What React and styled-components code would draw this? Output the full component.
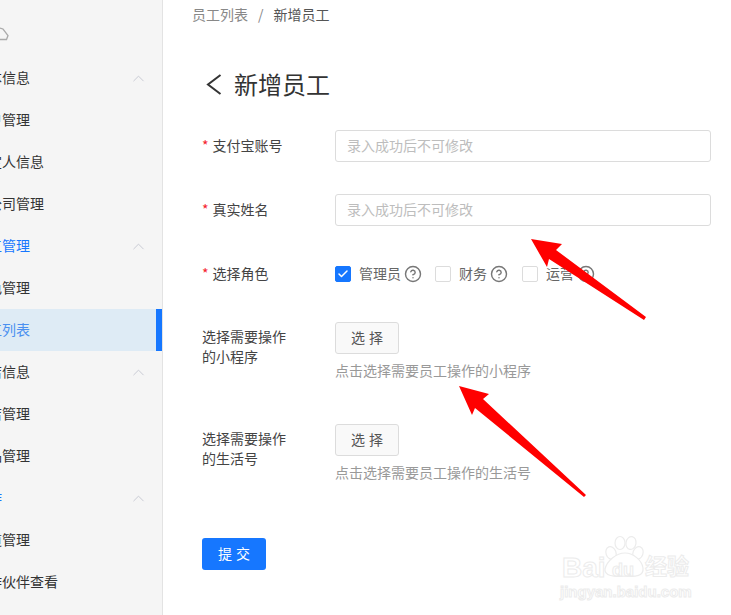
import React from 'react';
import styled, { createGlobalStyle } from 'styled-components';
import { CircleHelp, Check, ChevronUp } from 'lucide-react';

const Global = createGlobalStyle`
  html, body { margin: 0; padding: 0; background: #fff; }
  body { font-family: "Noto Sans CJK SC", "Liberation Sans", sans-serif; font-size: 14px; color: #333; }
`;
const Page = styled.div`
  position: relative; display: flex; width: 731px; height: 615px; overflow: hidden; background: #fff;
`;
const Sidebar = styled.nav`
  flex: none; width: 163px; height: 615px; box-sizing: border-box; overflow: hidden;
  background: #f5f5f5; border-right: 1px solid #e3e3e3; padding-top: 26px;
`;
const TopIcon = styled.svg`
  display: block; width: 10px; height: 16px; margin-bottom: 15px; color: #aaa;
`;
const NavRow = styled.div`
  height: 42px; display: flex; align-items: center; justify-content: space-between;
  padding-right: 14px; white-space: nowrap;
  color: ${p => (p.$blue ? '#1677ff' : '#333')};
  background: ${p => (p.$active ? '#deebf5' : 'transparent')};
  ${p => p.$active && 'color: #4a90f0; border-right: 6px solid #1677ff; padding-right: 8px;'}
`;
const NavText = styled.span`
  margin-left: -26px; padding-bottom: 2px;
`;
const Chevron = styled(ChevronUp)`
  color: #c6c8d2; flex: none;
`;
const Main = styled.main`
  flex: 1; min-width: 0; display: flex; flex-direction: column; padding: 0 20px 0 39px;
`;
const Breadcrumb = styled.div`
  height: 26px; display: flex; align-items: center; margin-left: -10px; color: #888; font-size: 14px; padding-top: 2px; box-sizing: border-box;
`;
const Sep = styled.span`
  margin: 0 10px; color: #888;
`;
const Current = styled.span`
  color: #555;
`;
const Title = styled.h1`
  margin: 41px 0 29px; height: 34px; display: flex; align-items: center; font-size: 24px; font-weight: 400; color: #333; line-height: 34px;
`;
const Back = styled.svg`
  width: 16px; height: 24px; margin: 2px 12px 0 4px; color: #333; flex: none;
`;
const Row = styled.div`
  display: flex; align-items: ${p => (p.$top ? 'flex-start' : 'center')};
  margin-bottom: ${p => p.$gap ?? 32}px;
`;
const Label = styled.label`
  flex: none; width: 133px; box-sizing: border-box; color: #444; font-size: 14px; line-height: 20px;
  padding-bottom: 2px;
  ${p => p.$top && 'padding-top: 4px;'}
`;
const LabelWrap = styled.span`
  display: block; width: 90px;
`;
const Star = styled.span`
  color: #f5222d; margin: 0 4px 0 0;
`;
const Input = styled.input`
  flex: 1; min-width: 0; height: 32px; box-sizing: border-box; border: 1px solid #dcdcdc; border-radius: 3px;
  padding: 0 11px 2px; font: 14px "Noto Sans CJK SC", sans-serif; background: #fff; outline: none;
  &::placeholder { color: #bdbdbd; opacity: 1; }
`;
const Field = styled.div`
  display: flex; flex-direction: column; align-items: flex-start;
`;
const Options = styled.div`
  display: flex; align-items: center; height: 32px;
`;
const Option = styled.div`
  display: flex; align-items: center; margin-right: ${p => p.$gap ?? 0}px; color: #666; font-size: 14px;
`;
const OptionText = styled.span`
  padding-bottom: 2px;
`;
const Box = styled.span`
  width: 16px; height: 16px; box-sizing: border-box; display: flex; align-items: center; justify-content: center;
  border-radius: 2px; margin-right: 8px; color: #fff;
  background: ${p => (p.$on ? '#1677ff' : '#fff')};
  border: 1px solid ${p => (p.$on ? '#1677ff' : '#dcdcdc')};
`;
const Help = styled(CircleHelp)`
  color: #777; margin-left: 3px; flex: none;
`;
const SelectButton = styled.button`
  width: 64px; height: 32px; box-sizing: border-box; border: 1px solid #dcdcdc; border-radius: 3px; background: #f9f9f9;
  color: #555; font: 14px "Noto Sans CJK SC", sans-serif; padding: 0 0 2px; word-spacing: 1px;
`;
const Hint = styled.div`
  margin-top: 6px; height: 20px; line-height: 20px; font-size: 14px; color: #999;
`;
const Submit = styled.button`
  width: 64px; height: 32px; border: 0; border-radius: 3px; background: #1677ff; color: #fff;
  font: 14px "Noto Sans CJK SC", sans-serif; padding: 0 0 2px; word-spacing: 1px;
`;
const ArrowLayer = styled.svg`
  position: absolute; inset: 0; width: 731px; height: 615px; pointer-events: none;
`;
const Watermark = styled.div`
  position: absolute; left: 560px; top: 535px; width: 140px; height: 70px; pointer-events: none;
`;
const Paw = styled.svg`
  position: absolute; left: 0; top: 0; width: 140px; height: 70px;
`;
const MarkText = styled.span`
  position: absolute; left: ${p => p.$x}px; top: ${p => p.$y}px; font-family: "Liberation Sans", "Noto Sans CJK SC", sans-serif;
  font-size: ${p => p.$s}px; line-height: 1; font-weight: 700; color: #fff; -webkit-text-stroke: 1px #ececec; white-space: nowrap;
`;

const nav = [
  ['基本信息', 1], ['账户管理'], ['法定人信息'], ['子公司管理'],
  ['员工管理', 1, 1], ['角色管理'], ['员工列表', 0, 0, 1],
  ['门店信息', 1], ['门店管理'], ['商品管理'],
  ['合作', 1, 1], ['渠道管理'], ['合作伙伴查看'],
];

function Question() { return <Help size={18} strokeWidth={1.9} />; }

export default function App() {
  return (
    <Page>
      <Global />
      <Sidebar>
        <TopIcon viewBox="0 0 10 16" fill="none" stroke="currentColor" strokeWidth="1.3">
          <path d="M0 2 L3 3 L8 9.5 L6.5 13.5 L0 13.5" />
        </TopIcon>
        {nav.map(([t, chev, blue, active]) => (
          <NavRow key={t} $blue={blue === 1} $active={active}>
            <NavText>{t}</NavText>
            {chev ? <Chevron size={19} strokeWidth={1.2} /> : null}
          </NavRow>
        ))}
      </Sidebar>
      <Main>
        <Breadcrumb>员工列表<Sep>/</Sep><Current>新增员工</Current></Breadcrumb>
        <Title>
          <Back viewBox="0 0 16 24" fill="none" stroke="currentColor" strokeWidth="2">
            <path d="M14.5 2 L2 11.5 L14.5 21" />
          </Back>
          新增员工
        </Title>
        <Row>
          <Label><Star>*</Star>支付宝账号</Label>
          <Input placeholder="录入成功后不可修改" />
        </Row>
        <Row>
          <Label><Star>*</Star>真实姓名</Label>
          <Input placeholder="录入成功后不可修改" />
        </Row>
        <Row>
          <Label><Star>*</Star>选择角色</Label>
          <Options>
            <Option $gap={13}><Box $on><Check size={12} strokeWidth={3} /></Box><OptionText>管理员</OptionText><Question /></Option>
            <Option $gap={14}><Box /><OptionText>财务</OptionText><Question /></Option>
            <Option><Box /><OptionText>运营</OptionText><Question /></Option>
          </Options>
        </Row>
        <Row $top $gap={44}>
          <Label $top><LabelWrap>选择需要操作的小程序</LabelWrap></Label>
          <Field>
            <SelectButton>选 择</SelectButton>
            <Hint>点击选择需要员工操作的小程序</Hint>
          </Field>
        </Row>
        <Row $top $gap={56}>
          <Label $top><LabelWrap>选择需要操作的生活号</LabelWrap></Label>
          <Field>
            <SelectButton>选 择</SelectButton>
            <Hint>点击选择需要员工操作的生活号</Hint>
          </Field>
        </Row>
        <div><Submit>提 交</Submit></div>
      </Main>
      <ArrowLayer viewBox="0 0 731 615">
        <polygon fill="#ff0000" points="531,239 562,244 556,250 646,317 644,320 549,259 547,267" />
        <polygon fill="#ff0000" points="459,386 489,394 483,399 586,495 584,497 475,408 472,415" />
      </ArrowLayer>
      <Watermark>
        <Paw viewBox="0 0 140 70" fill="#fff" stroke="#ececec" strokeWidth="1.2">
          <ellipse cx="60" cy="8" rx="5" ry="6.5" />
          <ellipse cx="51" cy="18" rx="5" ry="6.5" transform="rotate(-20 51 18)" />
          <ellipse cx="71" cy="8" rx="5" ry="6.5" transform="rotate(10 71 8)" />
          <ellipse cx="78" cy="18" rx="5" ry="6.5" transform="rotate(20 78 18)" />
          <path d="M45 34 C47 26 56 18 65 18 C74 18 82 26 83 33 C84 41 76 42 65 41 C54 42 44 41 45 34 Z" />
        </Paw>
        <MarkText $x={2} $y={19} $s={28}>Bai</MarkText>
        <MarkText $x={52} $y={26} $s={18}>du</MarkText>
        <MarkText $x={85} $y={21} $s={22}>经验</MarkText>
        <MarkText $x={0} $y={49} $s={15}>jingyan.baidu.com</MarkText>
      </Watermark>
    </Page>
  );
}
